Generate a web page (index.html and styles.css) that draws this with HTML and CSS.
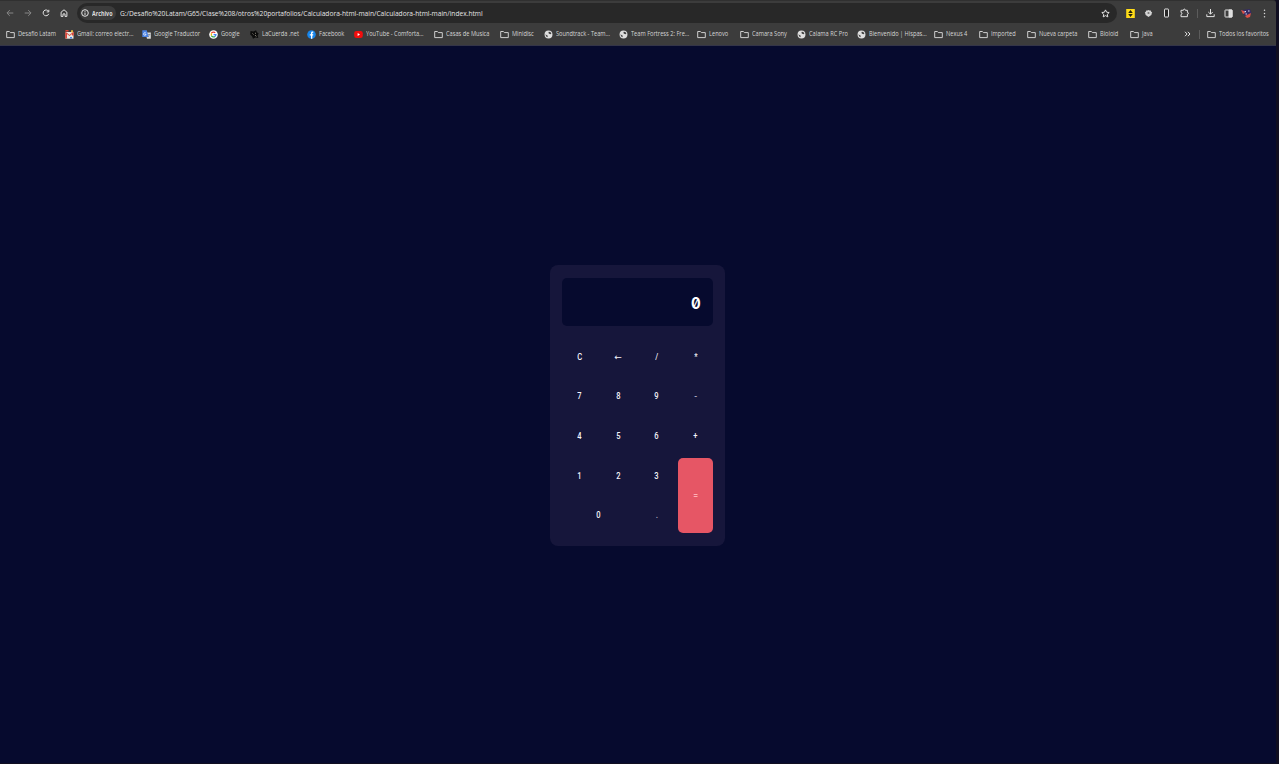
FILE: index.html
```html
<!DOCTYPE html>
<html lang="es">
<head>
<meta charset="utf-8">
<title>Calculadora</title>
<link rel="stylesheet" href="styles.css">
</head>
<body>
<svg class="defs" width="0" height="0" aria-hidden="true">
  <symbol id="folder" viewBox="0 0 9 8"><path d="M.7 7.1V1h2.7l1 1.1h3.9v5z" fill="none" stroke="currentColor" stroke-width=".95" stroke-linejoin="round"/></symbol>
  <symbol id="globe" viewBox="0 0 8 8"><circle cx="4" cy="4" r="3.5" fill="#dedede"/><path d="M1.2 3.7l1.3 1 .7.2v1.6l-1.2-.8zM4.3 1.6l1.2.1 1.1 1.2-.8.8-1.2-.4-.7-.7z" fill="#3c3c3c"/></symbol>
</svg>
<div class="window">
  <header class="browser">
    <div class="toolbar">
      <nav class="nav">
        <svg class="ico dim" viewBox="0 0 8 8"><path d="M7.3 4H1M3.8 1.1L.9 4l2.9 2.9"/></svg>
        <svg class="ico dim" viewBox="0 0 8 8"><path d="M.7 4H7M4.2 1.1L7.1 4 4.2 6.9"/></svg>
        <svg class="ico" viewBox="0 0 8 8"><path d="M6.5 2.3A2.9 2.9 0 1 0 6.8 4.8M6.8.8v2.1H4.7"/></svg>
        <svg class="ico" viewBox="0 0 8 8"><path d="M1.1 7.4V3.2L4 .8l2.9 2.4v4.2H5V4.9H3v2.5z"/></svg>
      </nav>
      <div class="address">
        <span class="chip"><svg class="ico" viewBox="0 0 8 8"><circle cx="4" cy="4" r="3.3"/><path d="M4 3.5V6M4 2v.8"/></svg><b>Archivo</b></span>
        <span class="url">G:/Desafio%20Latam/G65/Clase%208/otros%20portafolios/Calculadora-html-main/Calculadora-html-main/index.html</span>
        <svg class="ico star" viewBox="0 0 9 9"><path d="M4.5.9l1.1 2.3 2.6.3-1.9 1.8.5 2.6-2.3-1.3-2.3 1.3.5-2.6L.8 3.5l2.6-.3z"/></svg>
      </div>
      <div class="actions">
        <svg class="act" viewBox="0 0 9 9"><path fill="#ffdc18" d="M.2 0h8.6v9H.2z"/><path fill="#25210c" d="M4.5 1l2.3 2.9H2.2zM4.5 8L2.2 5.1h4.6z"/></svg>
        <svg class="act" viewBox="0 0 9 9"><path fill="#d4d4d4" d="M4.5.9l1 .7 1.3-.1.4 1.2 1 .9-.6 1.2-.2 1.3-1.2.6-1.7 1.4-1.7-1.4-1.2-.6-.2-1.3L.8 3.6l1-.9.4-1.2 1.3.1z"/><circle cx="4.5" cy="4" r="1.1" fill="#777"/></svg>
        <svg class="act ico tall" viewBox="0 0 9 9"><rect x="2.5" y=".5" width="4" height="8" rx=".5" fill="#272727"/></svg>
        <svg class="act ico tall" viewBox="0 0 9 9"><path d="M1 1.8h2.4C3.4.2 5.4.2 5.4 1.8h2v2.1c1.4 0 1.4 1.8 0 1.8v2.5H1V6c1.3 0 1.3-2 0-2z"/></svg>
        <i class="bar"></i>
        <svg class="act ico tall" viewBox="0 0 9 9"><path d="M4.5.5v5M2.3 3.5l2.2 2.2 2.2-2.2M.8 5.8v2.3h7.4V5.8"/></svg>
        <svg class="act ico" viewBox="0 0 9 9"><rect x="1" y="1" width="7" height="7" rx=".5"/><path fill="#ddd" d="M5 1h3v7H5z"/></svg>
        <svg class="act avatar" viewBox="0 0 11 9"><path fill="#342b64" d="M1 1l8-1 1.5 4L7 8 3 6z"/><path fill="#db5147" d="M0 1l3 1 1 2-2 1zM6 6l4-2-1 4-3 1-2-2z"/><path fill="#d9d8ed" d="M3.5 2h1.5v1.2H3.5zM7 1.5h1.5v1H7zM4.5 4.5H6v1H4.5z"/></svg>
        <svg class="act" viewBox="0 0 9 9"><g fill="#d8d8d8"><circle cx="4.5" cy="1.3" r=".75"/><circle cx="4.5" cy="4.5" r=".75"/><circle cx="4.5" cy="7.7" r=".75"/></g></svg>
      </div>
    </div>
    <div class="bookmarks">
      <a><svg><use href="#folder"/></svg><span>Desafio Latam</span></a>
      <a><svg viewBox="0 0 9 9"><path fill="#e9e5df" d="M.5 2h8v6.7h-8z"/><path fill="#db4437" d="M.3 1.5L4.5 5l4.2-3.5v4H7V4L4.5 6 2 4v4.5H.3zM.5 0h3v1.5h-3z"/><path fill="#4a86e8" d="M5 7h2v1.5H5z"/><path fill="#e2b53b" d="M6 .2h2v2H6z"/></svg><span>Gmail: correo electr...</span></a>
      <a><svg viewBox="0 0 9 9"><path fill="#dadada" d="M3.5 2.5h5.3v6.3H5z"/><path fill="#4b83e5" d="M.3.3h4.5L6.6 7H.3z"/><path d="M4 3.3a1.3 1.3 0 1 0 .1 1.2H3" fill="none" stroke="#fff" stroke-width=".7"/><path d="M6 4.5h2.3M7.4 4.6L6.2 7" stroke="#5a6f91" stroke-width=".6"/></svg><span>Google Traductor</span></a>
      <a><svg viewBox="0 0 9 9"><circle cx="4.5" cy="4.5" r="4.3" fill="#fff"/><g fill="none" stroke-width="1.3"><path stroke="#ea4335" d="M2.4 3.3A2.4 2.4 0 0 1 6.2 2.8"/><path stroke="#fbbc05" d="M2.4 3.3v2.4"/><path stroke="#34a853" d="M2.4 5.7A2.4 2.4 0 0 0 6 6.4"/><path stroke="#4285f4" d="M6 6.4A2.4 2.4 0 0 0 6.9 4.6H4.6"/></g></svg><span>Google</span></a>
      <a><svg viewBox="0 0 9 9"><path fill="#0c0c0c" d="M.5 1l3 .5L6 .3l1 2 1.7 1.2-1 1.8.6 2.7-3-.5L3 8.8 2 6.2.2 4.5z"/><path d="M2.5 3.5l1 1M5 5l1.3 1.5M6 3L5 3.5" stroke="#aaa294" stroke-width=".8"/></svg><span>LaCuerda .net</span></a>
      <a><svg viewBox="0 0 9 9"><circle cx="4.5" cy="4.5" r="4.3" fill="#1786ec"/><path fill="#fff" d="M4 8.8V5.5H2.8V4.2H4V3.3c0-1.4.8-1.9 2.3-1.6v1.1c-.8 0-1 .1-1 .7v.7h1l-.2 1.3h-.8v3.3z"/></svg><span>Facebook</span></a>
      <a><svg viewBox="0 0 9 9"><rect x=".2" y="1.1" width="8.6" height="6.8" rx="2.2" fill="#f20d0d"/><path fill="#fff" d="M3.6 3.1L6 4.5 3.6 5.9z"/></svg><span>YouTube - Comforta...</span></a>
      <a><svg><use href="#folder"/></svg><span>Casas de Musica</span></a>
      <a><svg><use href="#folder"/></svg><span>Minidisc</span></a>
      <a><svg><use href="#globe"/></svg><span>Soundtrack - Team...</span></a>
      <a><svg><use href="#globe"/></svg><span>Team Fortress 2: Fre...</span></a>
      <a><svg><use href="#folder"/></svg><span>Lenovo</span></a>
      <a><svg><use href="#folder"/></svg><span>Camara Sony</span></a>
      <a><svg><use href="#globe"/></svg><span>Calama RC Pro</span></a>
      <a><svg><use href="#globe"/></svg><span>Bienvenido | Hispas...</span></a>
      <a><svg><use href="#folder"/></svg><span>Nexus 4</span></a>
      <a><svg><use href="#folder"/></svg><span>Imported</span></a>
      <a><svg><use href="#folder"/></svg><span>Nueva carpeta</span></a>
      <a><svg><use href="#folder"/></svg><span>Bioloid</span></a>
      <a><svg><use href="#folder"/></svg><span>Java</span></a>
      <svg class="more ico" viewBox="0 0 7 8"><path d="M1 1.8L3.1 4 1 6.2M3.9 1.8L6 4 3.9 6.2"/></svg>
      <i class="bar"></i>
      <a class="all"><svg><use href="#folder"/></svg><span>Todos los favoritos</span></a>
    </div>
  </header>
  <main class="page">
    <section class="calculator">
      <output class="display"><span>0</span></output>
      <div class="keys">
        <button><span>C</span></button><button class="back">←</button><button><span>/</span></button><button><span>*</span></button>
        <button><span>7</span></button><button><span>8</span></button><button><span>9</span></button><button class="minus">-</button>
        <button><span>4</span></button><button><span>5</span></button><button><span>6</span></button><button><span>+</span></button>
        <button><span>1</span></button><button><span>2</span></button><button><span>3</span></button><button class="equal">=</button>
        <button class="zero"><span>0</span></button><button class="dot">.</button>
      </div>
    </section>
  </main>
</div>
</body>
</html>
```
FILE: styles.css
```css
* { box-sizing: border-box; }
body { margin: 0; height: 764px; overflow: hidden; background: #100e20; font-family: "Open Sans", sans-serif; }
.defs { display: block; height: 0; }
.window { width: 1276px; height: 763px; display: flex; flex-direction: column; }
.browser { height: 46px; flex: none; background: #3c3c3c; border-top: 1px solid #303030; border-bottom: 1px solid #343548; color: #dedede; border-radius: 0 3px 0 0; }
.toolbar { height: 24px; display: flex; align-items: center; }
.ico { width: 8px; height: 8px; fill: none; stroke: #e4e4e4; stroke-width: 1; }
.ico.dim { stroke: #858585; }
.nav { width: 77px; padding-left: 6px; display: flex; gap: 10px; flex: none; }
.address { width: 1040px; height: 20px; border-radius: 10px; background: #282828; display: flex; align-items: center; padding: 0 7px 0 3px; flex: none; }
.chip { width: 36px; height: 14px; border-radius: 7px; background: #3c3c3c; display: flex; align-items: center; gap: 3px; padding-left: 1px; font-size: 6.8px; flex: none; }
.chip .ico { flex: none; }
.chip b { transform: scaleX(.79); transform-origin: 0 50%; }
.url { margin-left: 4px; font-size: 7.8px; line-height: 12px; white-space: nowrap; color: #e6e6e6; transform: scaleX(.852); transform-origin: 0 50%; }
.star { width: 9px; height: 9px; margin-left: auto; }
.actions { display: flex; align-items: center; gap: 9px; padding-left: 9px; }
.act { width: 9px; height: 9px; flex: none; }
.act.tall { height: 10px; }
.avatar { width: 11px; margin: 0 -1px; }
.bar { width: 1px; height: 9px; background: #5c5c5c; margin: 0 -1px; flex: none; }
.bookmarks { height: 18px; display: flex; align-items: center; padding-left: 6px; }
.bookmarks a { display: flex; align-items: center; gap: 3px; flex: none; font-size: 7px; line-height: 10px; white-space: nowrap; color: #d6d6d6; }
.bookmarks a span { transform: scaleX(.81); transform-origin: 0 50%; }
.bookmarks a svg { width: 9px; height: 9px; flex: none; }
.bookmarks a:nth-child(1) { width: 59px; }
.bookmarks a:nth-child(2) { width: 77px; }
.bookmarks a:nth-child(3) { width: 67px; }
.bookmarks a:nth-child(4) { width: 41px; }
.bookmarks a:nth-child(5) { width: 57px; }
.bookmarks a:nth-child(6) { width: 47px; }
.bookmarks a:nth-child(7) { width: 80px; }
.bookmarks a:nth-child(8) { width: 66px; }
.bookmarks a:nth-child(9) { width: 44px; }
.bookmarks a:nth-child(10) { width: 75px; }
.bookmarks a:nth-child(11) { width: 78px; }
.bookmarks a:nth-child(12) { width: 43px; }
.bookmarks a:nth-child(13) { width: 57px; }
.bookmarks a:nth-child(14) { width: 60px; }
.bookmarks a:nth-child(15) { width: 77px; }
.bookmarks a:nth-child(16) { width: 45px; }
.bookmarks a:nth-child(17) { width: 48px; }
.bookmarks a:nth-child(18) { width: 61px; }
.bookmarks a:nth-child(19) { width: 42px; }
.bookmarks a:nth-child(20) { width: 54px; }
.more { width: 7px; height: 8px; flex: none; }
.bookmarks .bar { margin: 0 7px 0 8px; }
.page { flex: 1; background: #060a2e; padding: 219px 0 0 550.4px; }
.calculator { width: 174.6px; height: 281px; padding: 13px 12px 13px 11.6px; border-radius: 8px; background: #16163b; display: flex; flex-direction: column; justify-content: space-between; }
.display { height: 48px; border-radius: 5px; background: #060a2e; color: #fff; padding: 1px 12px 0 0; display: flex; align-items: center; justify-content: flex-end; font: bold 16px "Inter", sans-serif; font-feature-settings: "zero"; }
.display span { transform: scaleX(.9); transform-origin: 100% 50%; }
.keys { height: 194px; display: grid; grid-template-columns: repeat(4, 1fr); grid-template-rows: repeat(5, 1fr); column-gap: 4px; row-gap: 4.6px; }
.keys button { border: 0; padding: 0; border-radius: 5px; background: transparent; color: #f4f4fa; font: 500 8.6px "Roboto", sans-serif; }
.keys button span { display: inline-block; transform: scaleX(.88); }
.keys .zero { grid-column: span 2; }
.keys .equal { grid-row: span 2; grid-column: 4; background: #e65665; color: #ffb0b5; }
.keys .back { font: 9px "DejaVu Sans", sans-serif; }
.keys .minus { color: #b9b9cc; }
.keys .dot { color: #a9a9bd; }
```
